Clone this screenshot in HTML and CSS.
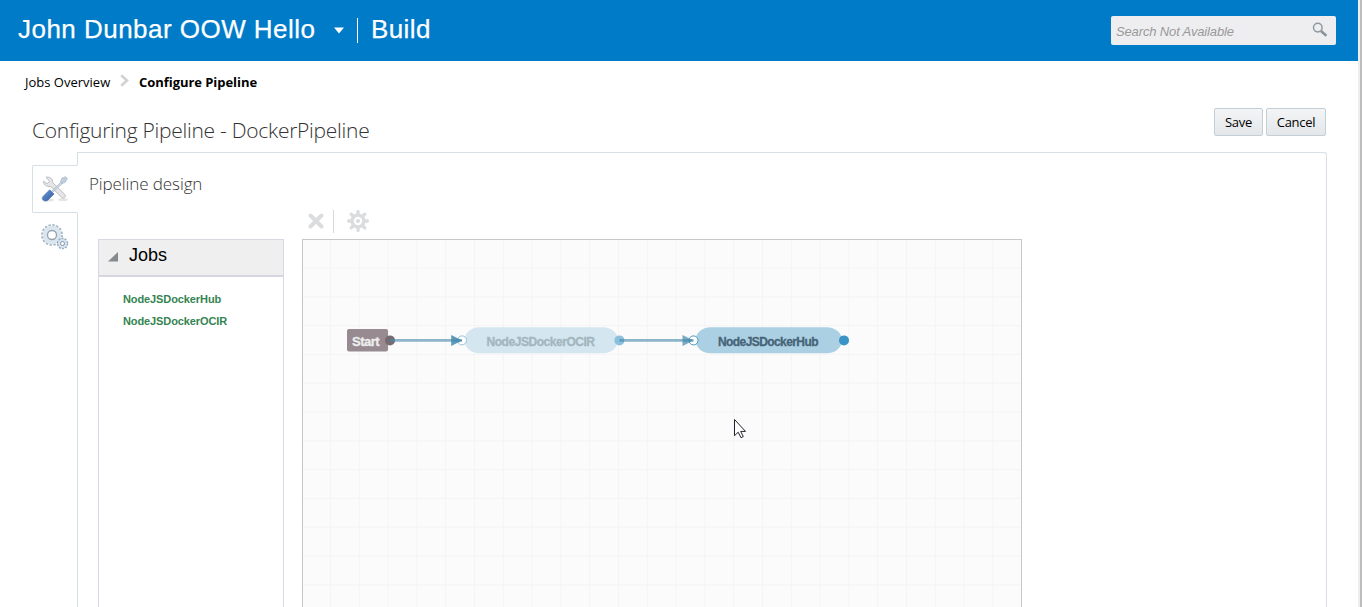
FILE: index.html
```html
<!DOCTYPE html>
<html lang="en">
<head>
<meta charset="utf-8">
<title>Configure Pipeline</title>
<link rel="stylesheet" href="styles.css">
</head>
<body>
<div class="page">
  <header class="topbar">
    <span class="project">John Dunbar OOW Hello</span>
    <svg class="caret" width="10" height="7"><path d="M0 .5h10L5 6.5z" fill="#fff"/></svg>
    <span class="divider"></span>
    <span class="section">Build</span>
    <div class="search">
      <span class="search-text">Search Not Available</span>
      <svg width="16" height="16" viewBox="0 0 16 16" fill="none"><circle cx="5.8" cy="5.6" r="4.3" stroke="#8e98a3" stroke-width="1.5"/><path d="M9 9l5.4 4.8" stroke="#8a929c" stroke-width="2.6"/></svg>
    </div>
  </header>
  <nav class="crumbs">
    <span class="crumb">Jobs Overview</span>
    <svg class="chevron" width="9" height="13"><path d="M1.2 1.2l5.8 5.3-5.8 5.3" fill="none" stroke="#d2d2d2" stroke-width="2.6"/></svg>
    <span class="crumb-current">Configure Pipeline</span>
  </nav>
  <div class="titlebar">
    <h1 class="title">Configuring Pipeline - DockerPipeline</h1>
    <div class="actions"><button class="btn save">Save</button><button class="btn cancel">Cancel</button></div>
  </div>
  <div class="workspace">
    <div class="tabs">
      <div class="tab active">
        <svg width="28" height="28" viewBox="0 0 28 28">
          <defs><linearGradient id="blade" x1="0" y1="0" x2="1" y2="1"><stop offset="0" stop-color="#6f9cd8"/><stop offset="1" stop-color="#2c599f"/></linearGradient></defs>
          <ellipse cx="7" cy="25" rx="6" ry="1.6" fill="#e4e4e4"/><ellipse cx="22" cy="24.5" rx="5" ry="1.6" fill="#e4e4e4"/>
          <path d="M5 2.200c3.500-.800 6.800 1.400 6.700 5.400l12 11.700c2 2-1 5-3 3.100L9.500 11.200c-3.700 1-7-1.200-7.100-5l3.600 2.500 2.600-2.200z" fill="#e5e6e7" stroke="#b4b7ba" stroke-width=".9"/>
          <path d="M11.500 16.500L21 7.500" stroke="#9ba7b4" stroke-width="2.400"/><path d="M11.500 16.500L21 7.500" stroke="#d6dfe8" stroke-width="1.200"/>
          <path d="M19.500 7l1.300-3.800 3.800-1.500 1.700 1.700L24.500 7l-3.700 1.700z" fill="#c0cfdf" stroke="#a5b5c7" stroke-width=".7"/>
          <path d="M8.700 14.800l4.300 4.200-6.200 6.200c-1.800 1.500-4.300.7-5.200-.9-.5-1-.2-2.200.6-3z" fill="url(#blade)" stroke="#3a66a6" stroke-width=".6"/>
        </svg>
      </div>
      <div class="tab gears">
        <svg width="30" height="28" viewBox="0 0 30 28">
          <circle cx="12" cy="12" r="9.800" fill="none" stroke="#a5b6c6" stroke-width="2.200" stroke-dasharray="2.400 1.450"/>
          <circle cx="12" cy="12" r="6.900" fill="none" stroke="#dae5ee" stroke-width="5"/>
          <circle cx="12" cy="12" r="4.500" fill="#fff" stroke="#94a1ae" stroke-width="1.300"/>
          <circle cx="22.500" cy="20.500" r="4.900" fill="#d7e4ee" stroke="#93aabd" stroke-width="1.700" stroke-dasharray="1.900 1.180"/>
          <circle cx="22.500" cy="20.500" r="4.200" fill="#d7e4ee"/><circle cx="22.500" cy="20.500" r="2" fill="#fff" stroke="#8197aa"/>
        </svg>
      </div>
    </div>
    <main class="panel">
      <h2 class="subtitle">Pipeline design</h2>
      <div class="columns">
        <aside class="jobs">
          <div class="jobs-head"><svg width="10" height="10"><path d="M10 0v9.500H0z" fill="#858a8d"/></svg><span>Jobs</span></div>
          <ul class="job-list"><li>NodeJSDockerHub</li><li>NodeJSDockerOCIR</li></ul>
        </aside>
        <section class="designer">
          <div class="tools">
            <svg width="16" height="16"><path d="M2.500 2.500l11 11M13.500 2.500l-11 11" stroke="#dadcde" stroke-width="4" stroke-linecap="round"/></svg>
            <span class="tool-sep"></span>
            <svg width="22" height="22" viewBox="-11 -11 22 22" fill="none" stroke="#dadcde">
              <path d="M0-9.400V-7M0 9.400V7M-9.400 0H-7M9.400 0H7M-6.800-6.800L-5-5M6.800 6.800L5 5M-6.800 6.800L-5 5M6.800-6.800L5-5" stroke-width="3.300" stroke-linecap="round"/>
              <circle r="5.900" stroke-width="3.400"/><circle r="2.100" fill="#dadcde" stroke="none"/>
            </svg>
          </div>
          <svg class="canvas" width="718" height="400" viewBox="303 240 718 400">
            <defs><pattern id="grid" x="302.200" y="239.700" width="28.800" height="28.800" patternUnits="userSpaceOnUse"><path d="M28.300 0V28.800M0 28.300H28.800" stroke="#f4f4f4" stroke-width="1"/></pattern></defs>
            <rect x="303" y="240" width="718" height="400" fill="#fbfbfb"/>
            <rect x="303" y="240" width="718" height="400" fill="url(#grid)"/>
            <rect x="347" y="329" width="41" height="22.500" rx="2" fill="#978b91"/>
            <text class="start-label" x="352" y="345.500" textLength="27.500">Start</text>
            <circle cx="390" cy="340.400" r="5" fill="#776a70"/>
            <rect x="464.500" y="327.300" width="153.500" height="26" rx="15" ry="13" fill="#d4e6ef"/>
            <rect x="695.500" y="327.300" width="146.500" height="26" rx="15" ry="13" fill="#acd0e3"/>
            <text class="node-label pale" x="486.500" y="346" textLength="108.500">NodeJSDockerOCIR</text>
            <text class="node-label" x="718" y="346" textLength="100.500">NodeJSDockerHub</text>
            <circle cx="462" cy="340.400" r="4.500" fill="#fff" stroke="#93c5dd"/>
            <circle cx="619.400" cy="340.400" r="5" fill="#8bbfdc"/>
            <circle cx="693.500" cy="340.400" r="4.500" fill="#fff" stroke="#4597bd"/>
            <circle cx="844" cy="340.400" r="5" fill="#3a93c4"/>
            <g class="wire"><path d="M390 340.400H462M619.500 340.400H693.500"/></g>
            <path d="M451.200 335l11 5.400-11 5.600z" fill="#4388ad" opacity=".85"/>
            <path d="M682.500 335l11 5.400-11 5.600z" fill="#4388ad" opacity=".7"/>
            <path d="M734.500 419.500v16.200l3.700-3.500 2.800 5.500 2.300-1.100-2.600-5.200h4.800z" fill="#fff" stroke="#22222e"/>
          </svg>
        </section>
      </div>
    </main>
  </div>
</div>
</body>
</html>
```
FILE: styles.css
```css
* { box-sizing: border-box; }
body { margin: 0; height: 607px; overflow: hidden; background: #fff; font-family: "Open Sans", "Noto Sans", sans-serif; color: #000; }
.page { width: 1362px; height: 607px; overflow: hidden; border-right: 2px solid #bdbdbd; box-shadow: inset -2px 0 #eee; }
.topbar { width: 1358px; height: 61px; background: #007bc8; color: #fff; display: flex; align-items: center; padding: 0 22px 0 18px; font: 26px "Liberation Sans", Arial, sans-serif; white-space: nowrap; }
.project, .section { line-height: 30px; padding-bottom: 3px; -webkit-text-stroke: .25px #fff; }
.project { width: 316px; letter-spacing: .47px; }
.caret { flex: none; }
.divider { width: 1px; height: 25px; background: #fff; margin: 0 13px; }
.section { letter-spacing: .4px; }
.search { margin-left: auto; width: 225px; height: 29px; background: #eeeef0; border-radius: 2px; display: flex; align-items: center; justify-content: space-between; padding: 0 8px 0 5px; }
.search svg { margin-bottom: 2px; }
.search-text { font: italic 13px "Liberation Sans", Arial, sans-serif; color: #999; padding-top: 2px; letter-spacing: -.14px; }
.crumbs { height: 43px; padding: 0 0 2px 25px; display: flex; align-items: center; font-size: 13px; white-space: nowrap; }
.crumb { width: 95px; }
.chevron { margin-right: 10px; margin-top: -2px; }
.crumb-current { font-weight: 700; letter-spacing: -.05px; }
.titlebar { height: 48px; padding: 0 36px 0 32px; width: 1362px; display: flex; justify-content: space-between; }
.title { margin: 11px 0 0; font-weight: 300; font-size: 21px; letter-spacing: -.27px; line-height: 30px; color: #333; white-space: nowrap; }
.actions { display: flex; gap: 3px; padding-top: 4px; }
.btn { height: 28px; border: 1px solid #c4ced7; border-radius: 2px; padding: 0; background: linear-gradient(#f3f4f5, #e3e7ea); font: 13px "Open Sans", sans-serif; letter-spacing: -.3px; color: #000; }
.save { width: 49px; }
.cancel { width: 60px; }
.workspace { display: flex; padding-left: 32px; height: 455px; }
.tabs { width: 46px; padding-top: 13px; position: relative; z-index: 1; margin-right: -1px; }
.tab { height: 48px; width: 46px; display: flex; align-items: center; justify-content: center; }
.tab.active { border: 1px solid #d6dfe6; border-right-color: #fff; background: #fff; border-radius: 2px 0 0 2px; }
.panel { width: 1250px; border: 1px solid #d6dfe6; border-bottom: 0; border-radius: 0 3px 0 0; padding-left: 11px; }
.subtitle { margin: 19px 0 1px; font-weight: 300; font-size: 17px; letter-spacing: -.1px; line-height: 24px; color: #333; }
.columns { display: flex; gap: 18px; padding: 10px 0 0 9px; }
.jobs { width: 186px; height: 400px; margin-top: 32px; border: 1px solid #d8d8e2; }
.jobs-head { height: 37px; background: #efefef; border-bottom: 2px solid #d8d5e2; display: flex; align-items: center; gap: 11px; padding: 0 0 4px 9px; font: 18px "Liberation Sans", Arial, sans-serif; }
.jobs-head svg { margin-top: 3px; }
.job-list { margin: 0; padding: 11px 0 0 24px; list-style: none; font: bold 11px/22px "Liberation Sans", Arial, sans-serif; letter-spacing: -.1px; color: #348450; }
.designer { width: 720px; }
.tools { height: 32px; display: flex; align-items: center; padding: 0 0 5px 6px; }
.tool-sep { width: 1px; height: 23px; background: #d5d9dd; margin: 2px 13px 0 9px; }
.canvas { display: block; box-sizing: content-box; border: 1px solid #c8c8c8; }
.start-label { font: bold 13px "Liberation Sans", Arial, sans-serif; fill: #eee; stroke: #eee; stroke-width: .3px; }
.node-label { font: bold 12px "Liberation Sans", Arial, sans-serif; fill: #456477; stroke: #456477; stroke-width: .3px; }
.node-label.pale { fill: #a2b6c0; stroke: #a2b6c0; }
.wire { stroke: #4388ad; stroke-width: 2.6; opacity: .6; }
```
